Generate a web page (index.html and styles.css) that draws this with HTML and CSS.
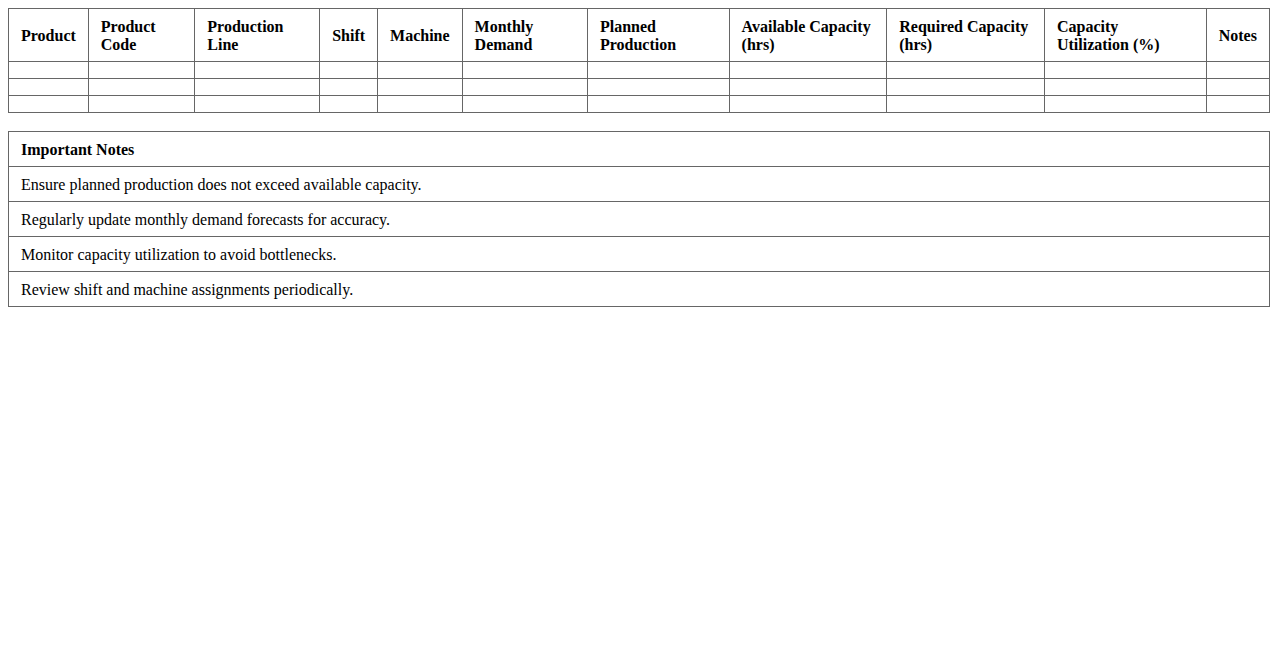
FILE: index.html
```html
<!DOCTYPE html>
<html>
<head>
<meta charset="utf-8">
<link rel="stylesheet" href="styles.css">
</head>
<body>
<table class="grid">
  <thead>
    <tr>
      <th>Product</th>
      <th>Product Code</th>
      <th>Production Line</th>
      <th>Shift</th>
      <th>Machine</th>
      <th>Monthly Demand</th>
      <th>Planned Production</th>
      <th>Available Capacity (hrs)</th>
      <th>Required Capacity (hrs)</th>
      <th>Capacity Utilization (%)</th>
      <th>Notes</th>
    </tr>
  </thead>
  <tbody>
    <tr><td></td><td></td><td></td><td></td><td></td><td></td><td></td><td></td><td></td><td></td><td></td></tr>
    <tr><td></td><td></td><td></td><td></td><td></td><td></td><td></td><td></td><td></td><td></td><td></td></tr>
    <tr><td></td><td></td><td></td><td></td><td></td><td></td><td></td><td></td><td></td><td></td><td></td></tr>
  </tbody>
</table>
<table class="grid notes">
  <thead>
    <tr><th>Important Notes</th></tr>
  </thead>
  <tbody>
    <tr><td>Ensure planned production does not exceed available capacity.</td></tr>
    <tr><td>Regularly update monthly demand forecasts for accuracy.</td></tr>
    <tr><td>Monitor capacity utilization to avoid bottlenecks.</td></tr>
    <tr><td>Review shift and machine assignments periodically.</td></tr>
  </tbody>
</table>
</body>
</html>
```

FILE: styles.css
```css
body {
  margin: 8px;
  font-family: "Liberation Serif", "Times New Roman", serif;
  font-size: 16px;
  color: #000;
  background: #fff;
}
.grid {
  width: 100%;
  border-collapse: collapse;
  margin-bottom: 18px;
}
.grid th,
.grid td {
  border: 1px solid #666;
  padding: 9px 12px 7px;
  text-align: left;
  line-height: 18px;
}
.grid th {
  font-weight: bold;
}
```
